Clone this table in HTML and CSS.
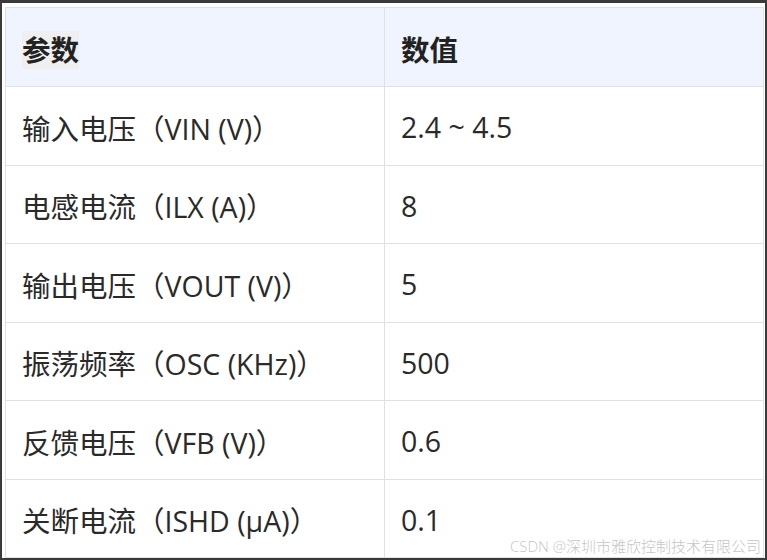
FILE: index.html
```html
<!DOCTYPE html>
<html lang="zh-CN">
<head>
<meta charset="utf-8">
<link rel="stylesheet" href="styles.css">
</head>
<body>
<div class="frame">
  <table class="params">
    <thead>
      <tr><th class="col1"><span class="hl">参数</span></th><th>数值</th></tr>
    </thead>
    <tbody>
      <tr><td>输入电压（VIN (V)）</td><td>2.4 ~ 4.5</td></tr>
      <tr><td>电感电流（ILX (A)）</td><td>8</td></tr>
      <tr><td>输出电压（VOUT (V)）</td><td>5</td></tr>
      <tr><td>振荡频率（OSC (KHz)）</td><td>500</td></tr>
      <tr><td>反馈电压（VFB (V)）</td><td>0.6</td></tr>
      <tr><td>关断电流（ISHD (μA)）</td><td>0.1</td></tr>
    </tbody>
  </table>
  <div class="watermark">CSDN @深圳市雅欣控制技术有限公司</div>
</div>
</body>
</html>
```
FILE: styles.css
```css
html, body {
  margin: 0;
  padding: 0;
  background: #3a3a3a;
}
body {
  width: 767px;
  height: 560px;
  overflow: hidden;
}
.frame {
  position: relative;
  margin: 3px 2px 2px 2px;
  height: 555px;
  background: #ffffff;
  padding: 4px 0 0 3px;
  box-sizing: border-box;
}
.params {
  border-collapse: collapse;
  width: 759px;
  font-family: "Open Sans", "Noto Sans CJK SC", sans-serif;
  font-size: 28.5px;
  color: #2a2a2a;
  table-layout: fixed;
}
.params th,
.params td {
  border: 1px solid #dfe2e5;
  padding: 3px 16px 0 16px;
  text-align: left;
  vertical-align: middle;
  white-space: nowrap;
}
.params th.col1 {
  width: 346px;
}
.params thead th {
  background: #eff4fe;
  font-weight: 700;
  color: #222;
  height: 75px;
}
.params tbody td {
  height: 74.5px;
}
.hl {
  background: #efefef;
}
.watermark {
  position: absolute;
  right: 4px;
  bottom: 2px;
  font-family: "Open Sans", "Noto Sans CJK SC", sans-serif;
  font-size: 15px;
  font-weight: 300;
  color: #c6c6c6;
}
```
